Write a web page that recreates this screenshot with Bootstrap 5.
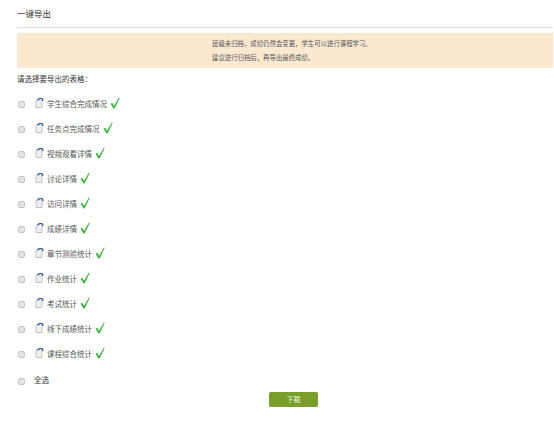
<!DOCTYPE html>
<html lang="zh"><head><meta charset="utf-8">
<link href="https://cdn.jsdelivr.net/npm/bootstrap@5.3.0/dist/css/bootstrap.min.css" rel="stylesheet">
<style>
html,body{background:#fff;overflow:hidden}
body{font-family:"Liberation Sans","Noto Sans CJK SC",sans-serif;font-size:7.5px;color:#555;line-height:1;height:421px}
.pagehead{font-size:8.5px;color:#333;height:28px;margin-left:17px;margin-right:1px;border-bottom:1px solid #ddd;padding-top:10px}
.notice{margin:5px 1px 0 17px;height:35px;background:#fbe8d1;border-radius:2px 0 0 2px;padding:4px 0 0 195px;color:#555;font-size:6.4px}
.notice p{margin:0;height:14px;line-height:14px}
.prompt{margin:7px 0 0 17px;font-size:7.5px;height:9px;line-height:9px;color:#333}
.rows{margin:8px 0 0 18px}
.rowitem{height:25px;display:flex;align-items:center}
.box{width:7px;height:7px;border:1px solid #c4c4c4;background:#e4e4e4;border-radius:2px;flex:none}
.doc{margin-left:10px;flex:none;margin-top:-4px}
.lbl{margin-left:3px;margin-top:1px;white-space:nowrap}
.tick{margin-left:3px;flex:none;margin-top:-3px}
.allrow{margin:7px 0 0 18px;height:14px;display:flex;align-items:center;color:#333}
.allrow span{margin-left:9px}
.dl{display:block;margin:4px 0 0 269px;width:49px;height:15px;padding:0;font-size:7px;line-height:15px;background:#7a9e2c;border:0;border-radius:2px;color:#f0f4e0}
</style></head><body>
<div class="pagehead">一键导出</div>
<div class="notice"><p>班级未归档，成绩仍然会变更，学生可以进行课程学习。</p><p>建议进行归档后，再导出最终成绩。</p></div>
<div class="prompt">请选择要导出的表格：</div>
<div class="rows" id="r"></div>
<div class="allrow"><i class="box"></i><span>全选</span></div>
<button class="btn dl" type="button">下载</button>
<script>
var names=["学生综合完成情况","任务点完成情况","视频观看详情","讨论详情","访问详情","成绩详情","章节测验统计","作业统计","考试统计","线下成绩统计","课程综合统计"];
document.getElementById('r').innerHTML=names.map(function(n){return '<div class="rowitem"><i class="box"></i><svg class="doc" width="9" height="10" viewBox="0 0 9 10"><path d="M1 9.500V2.500L3 .5H7V9.500Z" fill="#efefef" stroke="#b5b5b5" stroke-width=".8"/><path d="M2.500 2.500Q4.500 -.5 7.500 1L8 3" fill="none" stroke="#2c5a96" stroke-width="1.200"/></svg><span class="lbl">'+n+'</span><svg class="tick" width="10" height="12" viewBox="0 0 10 12"><path d="M.5 6.500L2.500 6L4 9L9 .5L9.700 1L4.500 11.500H3.500Z" fill="#35b035"/></svg></div>'}).join('');
</script>
<script src="https://cdn.jsdelivr.net/npm/bootstrap@5.3.0/dist/js/bootstrap.bundle.min.js"></script>
</body></html>
